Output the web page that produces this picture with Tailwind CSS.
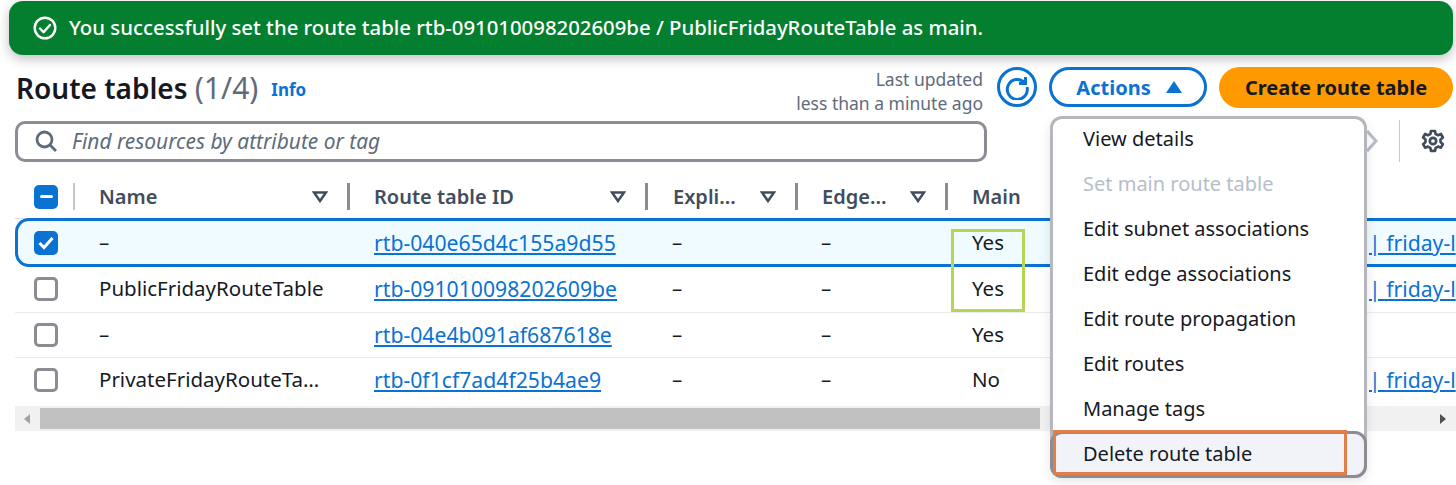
<!DOCTYPE html>
<html lang="en">
<head>
  <meta charset="UTF-8">
  <title>Route tables</title>
  <script src="https://cdn.jsdelivr.net/npm/@tailwindcss/browser@4"></script>
</head>
<body class="bg-white">
<div class="relative w-[1456px] h-[485px] overflow-hidden bg-white font-['Noto_Sans',sans-serif] text-[#16191f] text-[20.5px]">

  <!-- Flash banner -->
  <div class="ml-[9px] mr-[3px] mt-px h-[54px] rounded-[14px] bg-[#037f2f] text-white flex items-center pl-[24px] gap-[12px] shadow-[0_4px_12px_rgba(0,0,0,0.25)]">
    <svg width="24" height="24" viewBox="0 0 24 24" fill="none" stroke="white" stroke-width="2.4"><circle cx="12" cy="12" r="10.3"/><path d="M7 12.5l3.6 3.6L17 9" stroke-linecap="round" stroke-linejoin="round"/></svg>
    <span class="font-medium whitespace-nowrap text-[20.35px] -mt-[2px]">You successfully set the route table rtb-091010098202609be / PublicFridayRouteTable as main.</span>
  </div>

  <!-- Page header -->
  <div class="flex items-center h-[40px] mt-[12px] pl-[16px] pr-[3px]">
    <h1 class="text-[28px] font-semibold leading-none whitespace-nowrap mt-[2px]">Route tables <span class="font-normal text-[30px] text-[#5f6b7a]">(1/4)</span></h1>
    <a class="ml-[13px] mt-[6px] text-[17px] font-bold text-[#0972d3]">Info</a>
    <div class="ml-auto mt-[7px] text-right text-[17.5px] leading-[24px] text-[#5f6b7a] whitespace-nowrap mr-[14px]">Last updated<br>less than a minute ago</div>
    <button class="w-[40px] h-[40px] rounded-full border-[3px] border-[#0972d3] flex items-center justify-center mr-[12px]">
      <svg width="26" height="26" viewBox="0 0 26 26" fill="none" stroke="#0972d3" stroke-width="3"><path d="M20.5 8.5A10 10 0 1 0 23 13"/><path d="M21.5 3v6.5H15" stroke-linejoin="miter"/></svg>
    </button>
    <button class="w-[158px] h-[40px] rounded-full border-[3px] border-[#0972d3] text-[#0972d3] text-[20px] font-bold flex items-center justify-center gap-[15px] mr-[12px]">
      <span class="mt-[2px] ml-[2px]">Actions</span>
      <svg width="16" height="12" viewBox="0 0 16 12"><path d="M8 0l8 12H0z" fill="#0972d3"/></svg>
    </button>
    <button class="w-[234px] h-[41px] rounded-full bg-[#ff9900] text-[20px] font-bold flex items-center justify-center"><span class="mt-[2px]">Create route table</span></button>
  </div>

  <!-- Filter row -->
  <div class="flex items-center h-[42px] mt-[13px] pl-[15px]">
    <div class="w-[972px] h-[41px] rounded-[10px] border-[3px] border-[#8c8c94] flex items-center pl-[16px] gap-[14px]">
      <svg width="24" height="24" viewBox="0 0 24 24" fill="none" stroke="#5f6b7a" stroke-width="2.8"><circle cx="10.5" cy="10.5" r="7.5"/><path d="M16 16l6 6"/></svg>
      <span class="italic text-[#5f6b7a] text-[20.900px] mt-[2px]">Find resources by attribute or tag</span>
    </div>
    <svg class="ml-[378px]" width="14" height="28" viewBox="0 0 14 28" fill="none" stroke="#b6bec9" stroke-width="3"><path d="M2 4l9 10-9 10"/></svg>
    <div class="ml-[20px] w-px h-[42px] bg-[#c6c6cd]"></div>
    <svg class="ml-[21px]" width="24" height="24" viewBox="0 0 24 24" fill="none" stroke="#414d5c" stroke-width="2.700" stroke-linejoin="round"><circle cx="12" cy="12" r="3.2"/><path d="M10 2h4l.6 3 2.5 1.2 2.8-1.2 2 3.5-2.4 2 .1 2.8 2.3 1.9-2 3.5-2.8-1.1-2.5 1.3-.6 3h-4l-.6-3-2.5-1.3-2.8 1.1-2-3.5 2.3-1.9.1-2.8-2.4-2 2-3.5 2.8 1.2L9.400 5z"/></svg>
  </div>

  <!-- Table -->
  <div class="mt-[13px] ml-[15px] w-[1441px]">
    <div class="grid grid-cols-[62px_273px_298px_150px_150px_1fr] h-[44px] items-center border-b border-[#d5dbdb] font-semibold text-[20px] text-[#414d5c]">
      <div class="flex items-center h-full pl-[19px]">
        <span class="w-[24px] h-[24px] rounded-[5px] bg-[#0972d3] flex items-center justify-center"><span class="w-[13px] h-[3px] rounded-sm bg-white"></span></span>
        <span class="ml-[15px] w-[2px] h-[27px] bg-[#c6c6cd]"></span>
      </div>
      <div class="flex items-center pl-[22px] pr-[19px] h-[27px] border-r-[3px] border-[#8c8c94]"><span>Name</span><svg class="ml-auto" width="16" height="12" viewBox="0 0 16 12" fill="none" stroke="#414d5c" stroke-width="2.500"><path d="M2 1.500h12L8 10z"/></svg></div>
      <div class="flex items-center pl-[24px] pr-[19px] h-[27px] border-r-[3px] border-[#8c8c94]"><span>Route table ID</span><svg class="ml-auto" width="16" height="12" viewBox="0 0 16 12" fill="none" stroke="#414d5c" stroke-width="2.500"><path d="M2 1.500h12L8 10z"/></svg></div>
      <div class="flex items-center pl-[25px] pr-[19px] h-[27px] border-r-[3px] border-[#8c8c94]"><span>Expli...</span><svg class="ml-auto" width="16" height="12" viewBox="0 0 16 12" fill="none" stroke="#414d5c" stroke-width="2.500"><path d="M2 1.500h12L8 10z"/></svg></div>
      <div class="flex items-center pl-[24px] pr-[19px] h-[27px] border-r-[3px] border-[#8c8c94]"><span>Edge...</span><svg class="ml-auto" width="16" height="12" viewBox="0 0 16 12" fill="none" stroke="#414d5c" stroke-width="2.500"><path d="M2 1.500h12L8 10z"/></svg></div>
      <div class="pl-[24px]">Main</div>
    </div>

    <!-- selected row -->
    <div class="grid grid-cols-[59px_273px_298px_150px_150px_421px_1fr] h-[49px] -mt-px items-center bg-[#f0fbff] border-y-[3px] border-l-[3px] border-[#0972d3] rounded-l-[14px] relative z-10">
      <div class="pl-[16px] flex"><span class="w-[24px] h-[24px] rounded-[5px] bg-[#0972d3] flex items-center justify-center"><svg width="16" height="14" viewBox="0 0 16 14" fill="none" stroke="white" stroke-width="3"><path d="M1.500 7l4.500 4.500L14.500 2"/></svg></span></div>
      <div class="pl-[22px]">–</div>
      <div class="pl-[24px]"><a class="text-[#0972d3] text-[21.2px] underline">rtb-040e65d4c155a9d55</a></div>
      <div class="pl-[24px]">–</div>
      <div class="pl-[23px]">–</div>
      <div class="pl-[24px]">Yes</div>
      <div class="whitespace-nowrap"><a class="text-[#0972d3] text-[21.2px] underline">| friday-l</a></div>
    </div>

    <div class="grid grid-cols-[59px_273px_298px_150px_150px_421px_1fr] h-[46px] pb-[2px] pl-[3px] items-center border-b border-[#e9ebed]">
      <div class="pl-[16px] flex"><span class="w-[24px] h-[24px] rounded-[5px] border-[3px] border-[#8c8c94]"></span></div>
      <div class="pl-[22px]">PublicFridayRouteTable</div>
      <div class="pl-[24px]"><a class="text-[#0972d3] text-[21.2px] underline">rtb-091010098202609be</a></div>
      <div class="pl-[24px]">–</div>
      <div class="pl-[23px]">–</div>
      <div class="pl-[24px]">Yes</div>
      <div class="whitespace-nowrap"><a class="text-[#0972d3] text-[21.2px] underline">| friday-l</a></div>
    </div>

    <div class="grid grid-cols-[59px_273px_298px_150px_150px_421px_1fr] h-[45px] pb-px pl-[3px] items-center border-b border-[#e9ebed]">
      <div class="pl-[16px] flex"><span class="w-[24px] h-[24px] rounded-[5px] border-[3px] border-[#8c8c94]"></span></div>
      <div class="pl-[22px]">–</div>
      <div class="pl-[24px]"><a class="text-[#0972d3] text-[21.2px] underline">rtb-04e4b091af687618e</a></div>
      <div class="pl-[24px]">–</div>
      <div class="pl-[23px]">–</div>
      <div class="pl-[24px]">Yes</div>
      <div></div>
    </div>

    <div class="grid grid-cols-[59px_273px_298px_150px_150px_421px_1fr] h-[48px] pb-[5px] pl-[3px] items-center">
      <div class="pl-[16px] flex"><span class="w-[24px] h-[24px] rounded-[5px] border-[3px] border-[#8c8c94]"></span></div>
      <div class="pl-[22px]">PrivateFridayRouteTa…</div>
      <div class="pl-[24px]"><a class="text-[#0972d3] text-[21.2px] underline">rtb-0f1cf7ad4f25b4ae9</a></div>
      <div class="pl-[24px]">–</div>
      <div class="pl-[23px]">–</div>
      <div class="pl-[24px]">No</div>
      <div class="whitespace-nowrap"><a class="text-[#0972d3] text-[21.2px] underline">| friday-l</a></div>
    </div>

    <!-- horizontal scrollbar -->
    <div class="flex items-center h-[25px] bg-[#f1f1f1]">
      <svg class="ml-[9px] mr-[10px]" width="6" height="10" viewBox="0 0 6 10"><path d="M6 0v10L0 5z" fill="#a3a3a3"/></svg>
      <div class="w-[1000px] h-[21px] bg-[#c1c1c1]"></div>
      <svg class="ml-auto mr-[10px]" width="6" height="10" viewBox="0 0 6 10"><path d="M0 0v10l6-5z" fill="#505050"/></svg>
    </div>
  </div>

  <!-- Actions dropdown -->
  <ul class="absolute z-20 left-[1050px] top-[116px] w-[317px] h-[362px] bg-white rounded-[12px] border-[3px] border-[#b6b6bd] text-[20px] shadow-[0_4px_12px_rgba(0,0,0,0.1)]">
    <li class="h-[45px] -mt-[3px] pl-[30px] flex items-center">View details</li>
    <li class="h-[45px] pl-[30px] flex items-center text-[#b6bec9]">Set main route table</li>
    <li class="h-[45px] pl-[30px] flex items-center">Edit subnet associations</li>
    <li class="h-[45px] pl-[30px] flex items-center">Edit edge associations</li>
    <li class="h-[45px] pl-[30px] flex items-center">Edit route propagation</li>
    <li class="h-[45px] pl-[30px] flex items-center">Edit routes</li>
    <li class="h-[45px] pl-[30px] flex items-center">Manage tags</li>
    <li class="h-[47px] -mx-[3px] pl-[30px] pb-[2px] flex items-center bg-[#f2f3f8] rounded-[12px] border-[3px] border-[#8c8c94]">Delete route table</li>
  </ul>

  <!-- Annotation boxes drawn over the screenshot -->
  <div class="absolute z-30 left-[951px] top-[229px] w-[74px] h-[83px] border-[3px] border-[#b5d654]"></div>
  <div class="absolute z-30 left-[1053px] top-[430px] w-[294px] h-[45px] border-[3px] border-[#e07f4c]"></div>
</div>
</body>
</html>
